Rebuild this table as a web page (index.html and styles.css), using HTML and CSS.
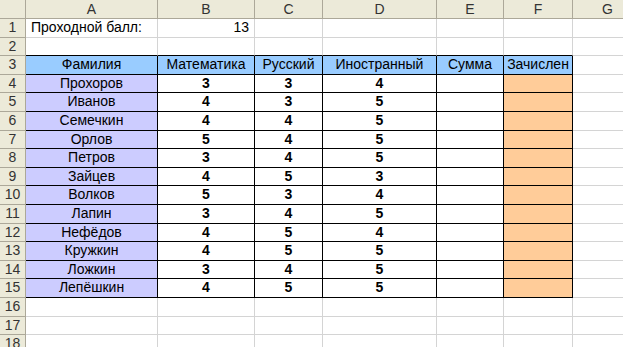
FILE: index.html
```html
<!DOCTYPE html>
<html lang="ru">
<head>
<meta charset="UTF-8">
<title>Зачисление</title>
<link rel="stylesheet" href="styles.css">
</head>
<body>
<div class="sheet">
    <!-- заголовки столбцов -->
    <div class="corner"></div>
    <div class="colhead">A</div>
    <div class="colhead">B</div>
    <div class="colhead">C</div>
    <div class="colhead">D</div>
    <div class="colhead">E</div>
    <div class="colhead">F</div>
    <div class="colhead">G</div>

    <!-- 1 -->
    <div class="rowhead">1</div>
    <div class="cell left">Проходной балл:</div>
    <div class="cell right">13</div>
    <div class="cell"></div><div class="cell"></div><div class="cell"></div><div class="cell"></div><div class="cell"></div>

    <!-- 2 -->
    <div class="rowhead">2</div>
    <div class="cell edge"></div><div class="cell edge"></div><div class="cell edge"></div><div class="cell edge"></div><div class="cell edge"></div><div class="cell edge"></div><div class="cell"></div>

    <!-- 3 -->
    <div class="rowhead">3</div>
    <div class="cell t head">Фамилия</div>
    <div class="cell t head">Математика</div>
    <div class="cell t head">Русский</div>
    <div class="cell t head">Иностранный</div>
    <div class="cell t head">Сумма</div>
    <div class="cell t head">Зачислен</div>
    <div class="cell"></div>
</div>
<script>
var sheet = document.querySelector(".sheet");
var pupils = [
    ["Прохоров", 3, 3, 4],
    ["Иванов", 4, 3, 5],
    ["Семечкин", 4, 4, 5],
    ["Орлов", 5, 4, 5],
    ["Петров", 3, 4, 5],
    ["Зайцев", 4, 5, 3],
    ["Волков", 5, 3, 4],
    ["Лапин", 3, 4, 5],
    ["Нефёдов", 4, 5, 4],
    ["Кружкин", 4, 5, 5],
    ["Ложкин", 3, 4, 5],
    ["Лепёшкин", 4, 5, 5]
];

var tag = "";
for (var i = 0; i < pupils.length; i++) {
    tag += "<div class='rowhead'>" + (i + 4) + "</div>";
    tag += "<div class='cell t name'>" + pupils[i][0] + "</div>";
    for (var a = 1; a < 4; a++) {
        tag += "<div class='cell t mark'>" + pupils[i][a] + "</div>";
    }
    tag += "<div class='cell t'></div>";
    tag += "<div class='cell t done'></div>";
    tag += "<div class='cell'></div>";
}
for (var r = 16; r <= 18; r++) {
    tag += "<div class='rowhead'>" + r + "</div>";
    for (var c = 0; c < 7; c++) tag += "<div class='cell'></div>";
}
sheet.insertAdjacentHTML("beforeend", tag);
</script>
</body>
</html>
```

FILE: styles.css
```css
body{
    margin: 0;
    background: #fff;
    font-family: "Liberation Sans", Arial, sans-serif;
    font-size: 14px;
    color: #000;
    overflow: hidden;
}
.sheet{
    display: grid;
    grid-template-columns: 26px 132px 97px 68px 114px 67px 69px 70px;
    grid-template-rows: 19px;
    grid-auto-rows: 18.6px;
    width: 643px;
}
.sheet > div{
    box-sizing: border-box;
    line-height: 17px;
    white-space: nowrap;
    overflow: hidden;
}
.corner, .colhead, .rowhead{
    background: #ecead9;
    color: #333;
    border-right: 1px solid #aca899;
    border-bottom: 1px solid #aca899;
    text-align: center;
}
.colhead{
    line-height: 18px !important;
}
.cell{
    border-right: 1px solid #d4d4d4;
    border-bottom: 1px solid #d4d4d4;
    padding: 0 3px;
}
.left{ text-align: left; padding-left: 5px; }
.right{ text-align: right; padding-right: 5px; }
.edge{ border-bottom-color: #000; }
.t{
    border-right-color: #000;
    border-bottom-color: #000;
    text-align: center;
}
.head{ background: #99ccff; }
.name{ background: #ccccff; }
.done{ background: #ffcc99; }
.mark{ font-weight: bold; }
```
